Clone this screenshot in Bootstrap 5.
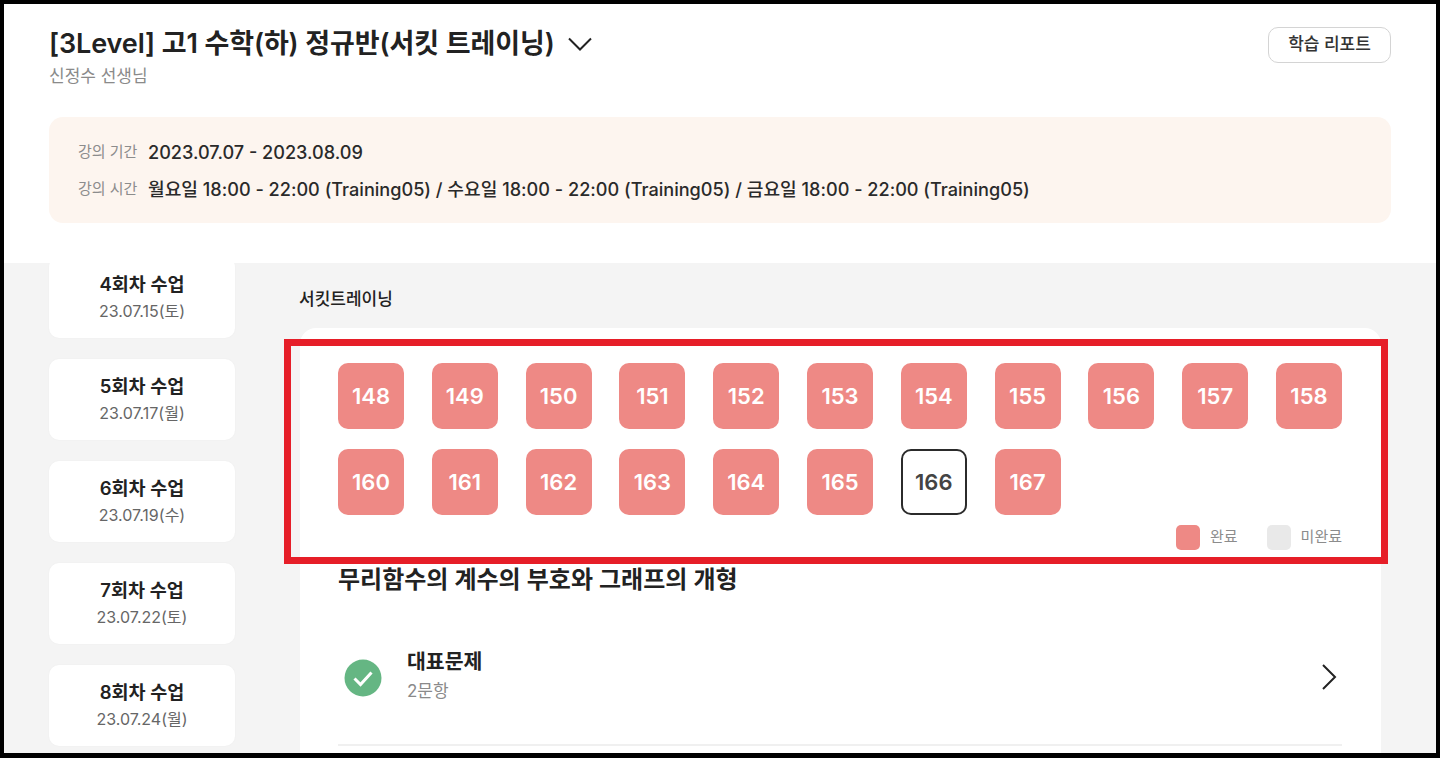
<!DOCTYPE html>
<html lang="ko">
<head>
<meta charset="utf-8">
<title>서킷트레이닝</title>
<link href="https://cdn.jsdelivr.net/npm/bootstrap@5.3.0/dist/css/bootstrap.min.css" rel="stylesheet">
<style>
html,body{height:758px;overflow:hidden;}
body{font-family:Inter,"Noto Sans CJK KR",sans-serif;color:#222;background:#000;}
.frame{position:relative;margin:4px;height:749px;width:1432px;background:#fff;overflow:hidden;}
.top-area{height:259px;padding:0 45px 0 45px;}
.title-line{padding-top:23px;height:113px;}
.course-title{font-size:27px;font-weight:600;line-height:34px;margin:0;letter-spacing:-.1px;}
.title-chevron{margin-left:13px;}
.teacher{font-size:17px;line-height:22px;color:#8a8a8a;margin-top:4px;}
.report-btn{width:123px;height:36px;margin-top:0;padding:0;font-size:17px;font-weight:500;color:#333;border:1px solid #d4d4d4;border-radius:10px;background:#fff;}
.period-panel{height:106px;background:#fdf5ef;border-radius:14px;padding:2px 29px 0;}
.period-line{height:37px;}
.period-label{width:70px;font-size:15px;color:#8c8c8c;flex:none;}
.period-value{font-size:18.12px;font-weight:500;color:#2a2a2a;}
.lower-area{height:490px;background:#f4f4f4;padding-left:45px;overflow:hidden;}
.side-col{width:186px;flex:none;margin-top:-6px;}
.lesson{height:81px;background:#fff;border-radius:10px;margin-bottom:21px;padding-bottom:2px;box-shadow:0 0 2px rgba(0,0,0,.04);}
.lesson-name{font-size:18.5px;font-weight:600;line-height:24px;color:#222;}
.lesson-date{font-size:16px;line-height:22px;color:#666;margin-top:4px;}
.main-col{margin-left:65px;width:1081px;flex:none;}
.section-name{font-size:17px;font-weight:500;line-height:22px;margin:25px 0 18px -1px;color:#222;}
.main-panel{background:#fff;border-radius:16px 16px 0 0;height:440px;padding:35px 39px 0 38px;}
.num-grid{display:grid;grid-template-columns:repeat(11,66px);justify-content:space-between;row-gap:20px;}
.num-cell{height:66px;border-radius:10px;background:#ee8985;color:#fff;font-size:22px;font-weight:600;}
.num-current{background:#fff;color:#444;border:2px solid #2b2b2b;}
.legend-row{margin-top:10px;height:25px;font-size:15px;color:#8c8c8c;gap:29px;}
.swatch{width:24px;height:25px;border-radius:5px;margin-right:10px;}
.swatch-done{background:#ee8985;}
.swatch-todo{background:#e9e9e9;}
.unit-title{font-size:24px;font-weight:600;line-height:32px;margin:14px 0 0;color:#222;}
.problem-row{height:150px;padding:15px 0 0 6px;border-bottom:2px solid #f0f0f0;}
.check-mark{width:38px;height:38px;flex:none;}
.problem-text{margin-left:25px;margin-bottom:6px;}
.problem-name{font-size:20.5px;font-weight:600;line-height:28px;color:#222;}
.problem-count{font-size:17px;line-height:22px;color:#8a8a8a;margin-top:4px;}
.chevron-end{margin-right:5px;margin-bottom:1px;}
.highlight-box{position:absolute;left:280px;top:335px;width:1104px;height:225px;border:7px solid #e61e28;pointer-events:none;}
</style>
</head>
<body>
<div class="frame">
  <section class="top-area">
    <div class="title-line d-flex justify-content-between align-items-start">
      <div>
        <div class="d-flex align-items-center">
          <h1 class="course-title">[3Level] 고1 수학(하) 정규반(서킷 트레이닝)</h1>
          <svg class="title-chevron" width="24" height="14" viewBox="0 0 24 14" fill="none" stroke="#222" stroke-width="2"><path d="M1 1.5 12 12.5 23 1.5"/></svg>
        </div>
        <div class="teacher">신정수 선생님</div>
      </div>
      <button type="button" class="btn report-btn">학습 리포트</button>
    </div>
    <div class="period-panel d-flex flex-column justify-content-center">
      <div class="period-line d-flex align-items-center">
        <span class="period-label">강의 기간</span><span class="period-value">2023.07.07 - 2023.08.09</span>
      </div>
      <div class="period-line d-flex align-items-center">
        <span class="period-label">강의 시간</span><span class="period-value">월요일 18:00 - 22:00 (Training05) / 수요일 18:00 - 22:00 (Training05) / 금요일 18:00 - 22:00 (Training05)</span>
      </div>
    </div>
  </section>
  <section class="lower-area d-flex">
    <aside class="side-col">
      <div class="lesson d-flex flex-column align-items-center justify-content-center"><div class="lesson-name">4회차 수업</div><div class="lesson-date">23.07.15(토)</div></div>
      <div class="lesson d-flex flex-column align-items-center justify-content-center"><div class="lesson-name">5회차 수업</div><div class="lesson-date">23.07.17(월)</div></div>
      <div class="lesson d-flex flex-column align-items-center justify-content-center"><div class="lesson-name">6회차 수업</div><div class="lesson-date">23.07.19(수)</div></div>
      <div class="lesson d-flex flex-column align-items-center justify-content-center"><div class="lesson-name">7회차 수업</div><div class="lesson-date">23.07.22(토)</div></div>
      <div class="lesson d-flex flex-column align-items-center justify-content-center"><div class="lesson-name">8회차 수업</div><div class="lesson-date">23.07.24(월)</div></div>
    </aside>
    <main class="main-col">
      <div class="section-name">서킷트레이닝</div>
      <div class="main-panel">
        <div class="num-grid">
          <div class="num-cell d-flex align-items-center justify-content-center">148</div>
          <div class="num-cell d-flex align-items-center justify-content-center">149</div>
          <div class="num-cell d-flex align-items-center justify-content-center">150</div>
          <div class="num-cell d-flex align-items-center justify-content-center">151</div>
          <div class="num-cell d-flex align-items-center justify-content-center">152</div>
          <div class="num-cell d-flex align-items-center justify-content-center">153</div>
          <div class="num-cell d-flex align-items-center justify-content-center">154</div>
          <div class="num-cell d-flex align-items-center justify-content-center">155</div>
          <div class="num-cell d-flex align-items-center justify-content-center">156</div>
          <div class="num-cell d-flex align-items-center justify-content-center">157</div>
          <div class="num-cell d-flex align-items-center justify-content-center">158</div>
          <div class="num-cell d-flex align-items-center justify-content-center">160</div>
          <div class="num-cell d-flex align-items-center justify-content-center">161</div>
          <div class="num-cell d-flex align-items-center justify-content-center">162</div>
          <div class="num-cell d-flex align-items-center justify-content-center">163</div>
          <div class="num-cell d-flex align-items-center justify-content-center">164</div>
          <div class="num-cell d-flex align-items-center justify-content-center">165</div>
          <div class="num-cell num-current d-flex align-items-center justify-content-center">166</div>
          <div class="num-cell d-flex align-items-center justify-content-center">167</div>
        </div>
        <div class="legend-row d-flex justify-content-end">
          <div class="d-flex align-items-center"><span class="swatch swatch-done"></span>완료</div>
          <div class="d-flex align-items-center"><span class="swatch swatch-todo"></span>미완료</div>
        </div>
        <h2 class="unit-title">무리함수의 계수의 부호와 그래프의 개형</h2>
        <div class="problem-row d-flex align-items-center">
          <svg class="check-mark" viewBox="0 0 38 38"><circle cx="19" cy="19" r="18.5" fill="#65b683"/><path d="M10.5 19.5 16.5 25.5 27.5 13.5" fill="none" stroke="#fff" stroke-width="3"/></svg>
          <div class="problem-text flex-grow-1">
            <div class="problem-name">대표문제</div>
            <div class="problem-count">2문항</div>
          </div>
          <svg class="chevron-end" width="16" height="26" viewBox="0 0 16 26" fill="none" stroke="#222" stroke-width="2"><path d="M2 1 14 13 2 25"/></svg>
        </div>
      </div>
    </main>
  </section>
  <div class="highlight-box"></div>
</div>
<script src="https://cdn.jsdelivr.net/npm/bootstrap@5.3.0/dist/js/bootstrap.bundle.min.js"></script>
</body>
</html>
